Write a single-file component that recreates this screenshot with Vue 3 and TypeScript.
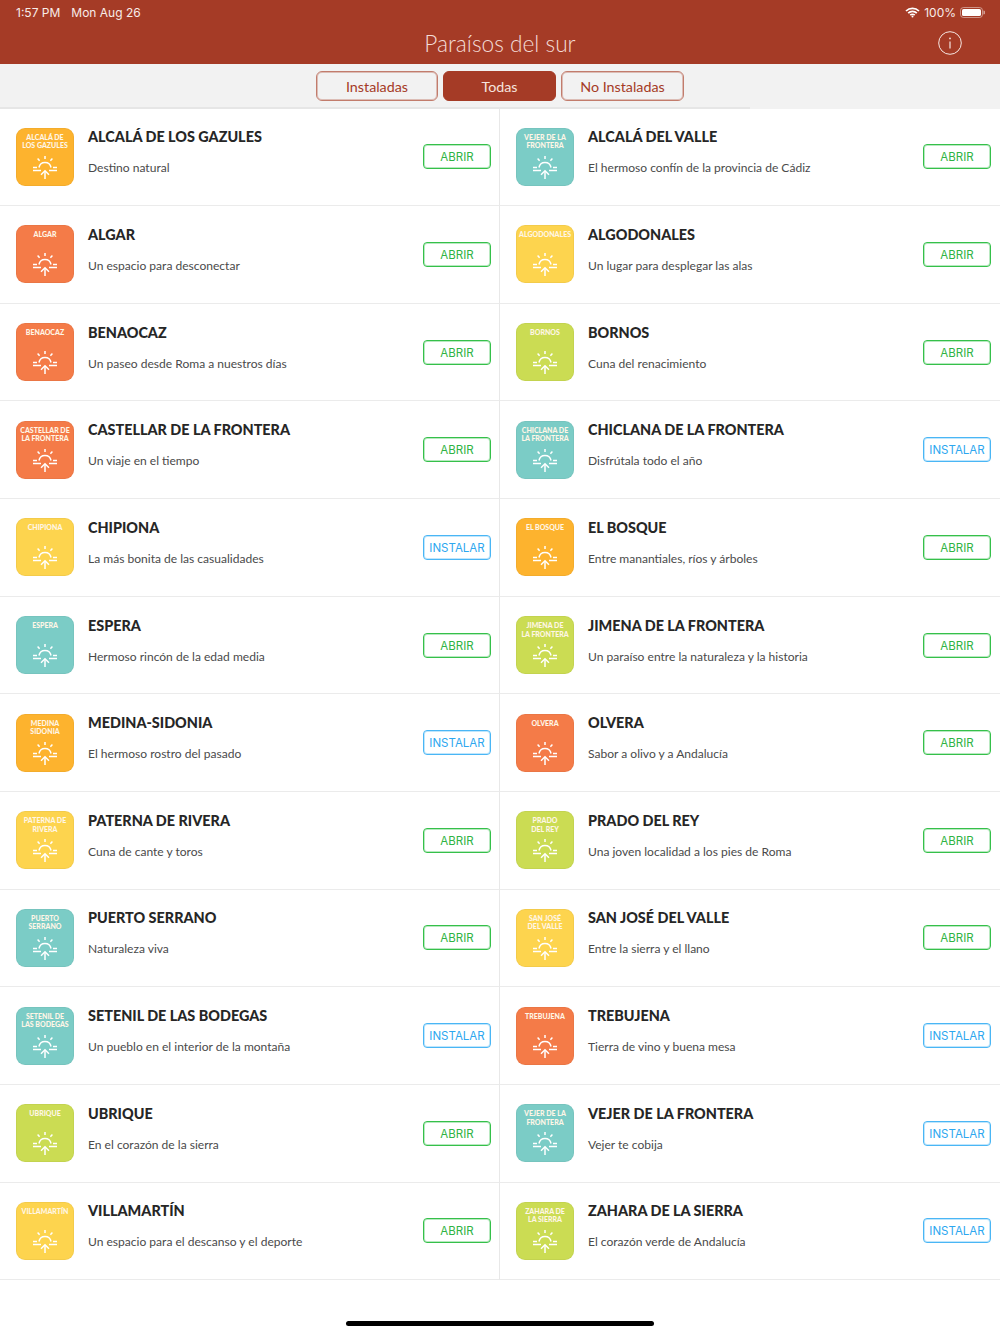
<script setup lang="ts">
import { ref } from 'vue';

type Tone = 'amber' | 'teal' | 'orange' | 'yellow' | 'lime';

interface Town {
  name: string;
  tagline: string;
  label: string[];
  tone: Tone;
  installed: boolean;
}

const tabs = ['Instaladas', 'Todas', 'No Instaladas'];
const activeTab = ref('Todas');

const towns: Town[] = [
  { name: 'ALCALÁ DE LOS GAZULES', tagline: 'Destino natural', label: ['ALCALÁ DE', 'LOS GAZULES'], tone: 'amber', installed: true },
  { name: 'ALCALÁ DEL VALLE', tagline: 'El hermoso confín de la provincia de Cádiz', label: ['VEJER DE LA', 'FRONTERA'], tone: 'teal', installed: true },
  { name: 'ALGAR', tagline: 'Un espacio para desconectar', label: ['ALGAR'], tone: 'orange', installed: true },
  { name: 'ALGODONALES', tagline: 'Un lugar para desplegar las alas', label: ['ALGODONALES'], tone: 'yellow', installed: true },
  { name: 'BENAOCAZ', tagline: 'Un paseo desde Roma a nuestros días', label: ['BENAOCAZ'], tone: 'orange', installed: true },
  { name: 'BORNOS', tagline: 'Cuna del renacimiento', label: ['BORNOS'], tone: 'lime', installed: true },
  { name: 'CASTELLAR DE LA FRONTERA', tagline: 'Un viaje en el tiempo', label: ['CASTELLAR DE', 'LA FRONTERA'], tone: 'orange', installed: true },
  { name: 'CHICLANA DE LA FRONTERA', tagline: 'Disfrútala todo el año', label: ['CHICLANA DE', 'LA FRONTERA'], tone: 'teal', installed: false },
  { name: 'CHIPIONA', tagline: 'La más bonita de las casualidades', label: ['CHIPIONA'], tone: 'yellow', installed: false },
  { name: 'EL BOSQUE', tagline: 'Entre manantiales, ríos y árboles', label: ['EL BOSQUE'], tone: 'amber', installed: true },
  { name: 'ESPERA', tagline: 'Hermoso rincón de la edad media', label: ['ESPERA'], tone: 'teal', installed: true },
  { name: 'JIMENA DE LA FRONTERA', tagline: 'Un paraíso entre la naturaleza y la historia', label: ['JIMENA DE', 'LA FRONTERA'], tone: 'lime', installed: true },
  { name: 'MEDINA-SIDONIA', tagline: 'El hermoso rostro del pasado', label: ['MEDINA', 'SIDONIA'], tone: 'amber', installed: false },
  { name: 'OLVERA', tagline: 'Sabor a olivo y a Andalucía', label: ['OLVERA'], tone: 'orange', installed: true },
  { name: 'PATERNA DE RIVERA', tagline: 'Cuna de cante y toros', label: ['PATERNA DE', 'RIVERA'], tone: 'yellow', installed: true },
  { name: 'PRADO DEL REY', tagline: 'Una joven localidad a los pies de Roma', label: ['PRADO', 'DEL REY'], tone: 'lime', installed: true },
  { name: 'PUERTO SERRANO', tagline: 'Naturaleza viva', label: ['PUERTO', 'SERRANO'], tone: 'teal', installed: true },
  { name: 'SAN JOSÉ DEL VALLE', tagline: 'Entre la sierra y el llano', label: ['SAN JOSÉ', 'DEL VALLE'], tone: 'yellow', installed: true },
  { name: 'SETENIL DE LAS BODEGAS', tagline: 'Un pueblo en el interior de la montaña', label: ['SETENIL DE', 'LAS BODEGAS'], tone: 'teal', installed: false },
  { name: 'TREBUJENA', tagline: 'Tierra de vino y buena mesa', label: ['TREBUJENA'], tone: 'orange', installed: false },
  { name: 'UBRIQUE', tagline: 'En el corazón de la sierra', label: ['UBRIQUE'], tone: 'lime', installed: true },
  { name: 'VEJER DE LA FRONTERA', tagline: 'Vejer te cobija', label: ['VEJER DE LA', 'FRONTERA'], tone: 'teal', installed: false },
  { name: 'VILLAMARTÍN', tagline: 'Un espacio para el descanso y el deporte', label: ['VILLAMARTÍN'], tone: 'yellow', installed: true },
  { name: 'ZAHARA DE LA SIERRA', tagline: 'El corazón verde de Andalucía', label: ['ZAHARA DE', 'LA SIERRA'], tone: 'lime', installed: false },
];
</script>

<template>
  <div class="page">
    <header class="topbar">
      <div class="status">
        <span class="clock">1:57 PM</span>
        <span class="date">Mon Aug 26</span>
        <span class="status-right">
          <svg class="wifi" width="15" height="11" viewBox="0 0 15 11" fill="none" stroke="#fff" stroke-width="1.7">
            <path d="M1 4 A9.2 9.2 0 0 1 14 4" />
            <path d="M3.2 6.2 A6 6 0 0 1 11.8 6.2" />
            <path d="M5.3 8.2 A3 3 0 0 1 9.7 8.2" />
            <circle cx="7.5" cy="9.6" r="1" fill="#fff" stroke="none" />
          </svg>
          <span>100%</span>
          <svg class="battery" width="25" height="11" viewBox="0 0 25 11">
            <rect x="0.5" y="0.5" width="22" height="10" rx="3" fill="none" stroke="#fff" stroke-opacity="0.45" />
            <rect x="2" y="2" width="19" height="7" rx="1.6" fill="#fff" />
            <path d="M23.4 3.6 a1.9 1.9 0 0 1 0 3.8 z" fill="#fff" fill-opacity="0.5" />
          </svg>
        </span>
      </div>
      <div class="nav">
        <h1 class="title">Paraísos del sur</h1>
        <svg class="info" width="24" height="24" viewBox="0 0 24 24" fill="none" stroke="#f6e6e2" stroke-width="1">
          <circle cx="12" cy="12" r="11.3" />
          <path d="M12 10.5 V17.5" stroke-width="1.2" />
          <circle cx="12" cy="7.4" r="0.9" fill="#f6e6e2" stroke="none" />
        </svg>
      </div>
    </header>

    <nav class="tabs">
      <button
        v-for="tab in tabs"
        :key="tab"
        :class="['tab', { active: tab === activeTab }]"
        @click="activeTab = tab"
      >
        {{ tab }}
      </button>
    </nav>

    <main class="grid">
      <article v-for="town in towns" :key="town.name" class="row">
        <div :class="['badge', `tone-${town.tone}`]">
          <div class="badge-label">
            <span v-for="line in town.label" :key="line">{{ line }}</span>
          </div>
          <svg class="sun" width="24" height="24" viewBox="0 0 24 24" fill="none" stroke="#fff" stroke-width="1.5">
            <path d="M6 11.5 A6.1 6.1 0 0 1 18 11.5" />
            <path d="M12 0 V3" />
            <path d="M4.6 2.6 L6.6 4.8" />
            <path d="M19.4 2.6 L17.4 4.8" />
            <path d="M0 11.5 H4" />
            <path d="M20 11.5 H24" />
            <path d="M0 14.5 H8" />
            <path d="M16 14.5 H24" />
            <path d="M12 23 V15" />
            <path d="M8 18.8 L12 14.8 L16 18.8" />
          </svg>
        </div>
        <div class="info-col">
          <h2 class="name">{{ town.name }}</h2>
          <p class="tagline">{{ town.tagline }}</p>
        </div>
        <button :class="['action', town.installed ? 'open' : 'install']">
          {{ town.installed ? 'ABRIR' : 'INSTALAR' }}
        </button>
      </article>
    </main>

    <div class="home-bar"></div>
  </div>
</template>

<style>
html,
body {
  margin: 0;
  background: #fff;
}
</style>

<style scoped>
.page {
  width: 1000px;
  height: 1334px;
  overflow: hidden;
  position: relative;
  font-family: Lato, "Noto Sans", sans-serif;
  color: #2b2b2b;
}

.topbar {
  height: 64px;
  background: #a53b26;
  color: #fff;
}

.status {
  height: 24px;
  display: flex;
  align-items: center;
  padding: 0 15px 0 16px;
  font-family: Inter, "Liberation Sans", sans-serif;
  font-size: 12px;
  color: #f8ece9;
}

.date {
  margin-left: 11px;
}

.status-right {
  margin-left: auto;
  display: flex;
  align-items: center;
  gap: 4px;
}

.nav {
  height: 40px;
  display: flex;
  align-items: center;
  justify-content: center;
  position: relative;
}

.title {
  margin: 0 0 2px;
  font-size: 22.7px;
  font-weight: 300;
  color: #f3dcd6;
}

.info {
  position: absolute;
  right: 38px;
  top: 7px;
}

.tabs {
  height: 44.5px;
  box-sizing: border-box;
  background: #f2f2f2;
  display: flex;
  justify-content: center;
  gap: 5px;
  padding: 7px 316px;
  position: relative;
}

/* la linea solo llega a 750 en el original */
.tabs::after {
  content: '';
  position: absolute;
  left: 0;
  bottom: 0;
  width: 750px;
  height: 2px;
  background: #e6e6e6;
}

.tab {
  flex: none;
  width: 122px;
  height: 30px;
  padding: 0;
  box-sizing: border-box;
  border: 1px solid #c27c6c;
  box-shadow: inset 0 0 0 1px rgba(194, 124, 108, 0.45);
  border-radius: 6px;
  background: transparent;
  font-family: Lato, sans-serif;
  font-size: 14.3px;
  color: #a53b26;
}

.tab:nth-child(2) {
  width: 113px;
}

.tab:nth-child(3) {
  width: 123px;
}

.tab.active {
  background: #a53b26;
  border-color: #a53b26;
  box-shadow: none;
  color: #f6e3de;
}

.grid {
  display: grid;
  grid-template-columns: 500px 500px;
  grid-auto-rows: 97.65px;
}

.row {
  display: flex;
  align-items: center;
  box-sizing: border-box;
  padding: 0 9px 0 16px;
  border-bottom: 1px solid #ebebeb;
}

.row:nth-child(odd) {
  border-right: 1px solid #e8e8e8;
  padding-right: 8px;
}

.badge {
  flex: none;
  width: 58px;
  height: 58px;
  box-sizing: border-box;
  border-radius: 9px;
  border: 1px solid rgba(0, 0, 0, 0.04);
  display: flex;
  flex-direction: column;
  align-items: center;
  position: relative;
}

.tone-amber { background: #fdb32e; }
.tone-teal { background: #7bccc6; }
.tone-orange { background: #f47b48; }
.tone-yellow { background: #fdd44e; }
.tone-lime { background: #cbdc53; }

.badge-label {
  display: flex;
  flex-direction: column;
  align-items: center;
  margin-top: 4px;
  font-size: 7px;
  line-height: 8.5px;
  font-weight: 900;
  color: #fff6e6;
  white-space: nowrap;
}

.sun {
  position: absolute;
  left: 16px;
  top: 27px;
}

.info-col {
  flex: 1;
  min-width: 0;
  margin-left: 14px;
  margin-top: -8px;
}

.name {
  margin: 0;
  font-size: 14.4px;
  line-height: 20px;
  font-weight: 900;
  color: #262626;
}

.tagline {
  margin: 11px 0 0;
  font-size: 12.05px;
  line-height: 20px;
  font-weight: 400;
  color: #4a4a4a;
}

.action {
  flex: none;
  width: 68px;
  height: 25px;
  padding: 1px 0 0;
  box-sizing: border-box;
  border-radius: 4px;
  background: #fff;
  font-family: Inter, "Liberation Sans", sans-serif;
  font-size: 11.5px;
}

.open {
  border: 1px solid #35c04a;
  box-shadow: inset 0 0 0 1px rgba(53, 192, 74, 0.35);
  color: #2fb344;
}

.install {
  border: 1px solid #4ab6f5;
  box-shadow: inset 0 0 0 1px rgba(74, 182, 245, 0.35);
  color: #2da7ef;
}

.home-bar {
  position: absolute;
  left: 346px;
  bottom: 8px;
  width: 308px;
  height: 5px;
  border-radius: 3px;
  background: #000;
}
</style>
